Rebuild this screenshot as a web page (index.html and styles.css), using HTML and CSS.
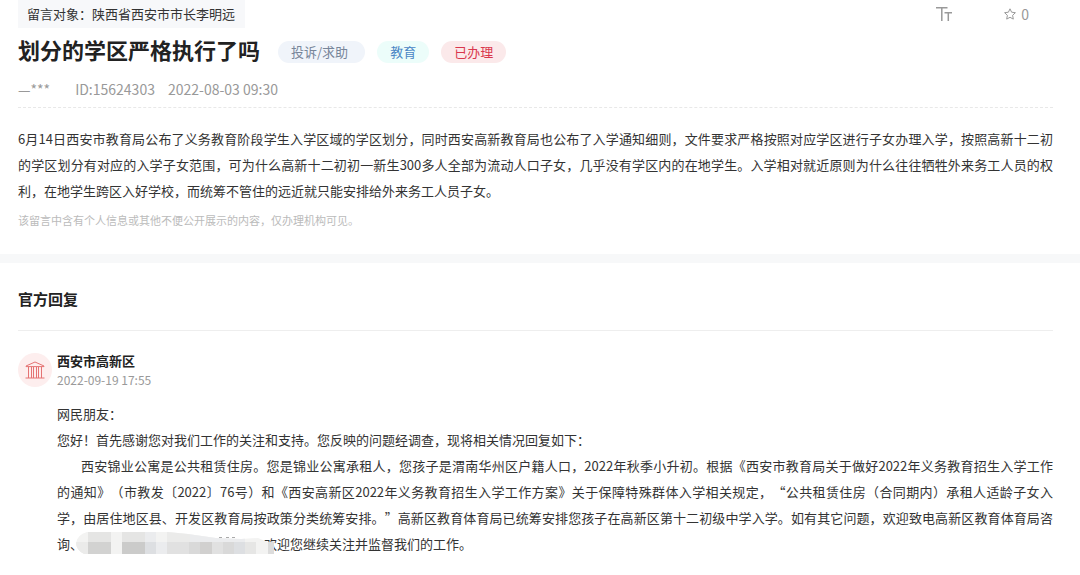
FILE: index.html
```
<!DOCTYPE html>
<html lang="zh-CN">
<head>
    <meta charset="UTF-8">
    <meta name="viewport" content="width=device-width, initial-scale=1.0">
    <title>划分的学区严格执行了吗</title>
    <link rel="stylesheet" href="styles.css">
</head>
<body>
    <main>
        <section class="message">
            <div class="top-bar">
                <div class="target">留言对象：陕西省西安市市长李明远</div>
                <div class="tools">
                    <button class="tool-btn" aria-label="字体大小">
                        <svg width="16" height="16" viewBox="0 0 16 16" fill="none" stroke="#999" stroke-width="1.5">
                            <path d="M0 1.7h11.5M5.8 1.7V15M8.5 6.7H16M12.3 6.7V15"/>
                        </svg>
                    </button>
                    <button class="tool-btn" aria-label="收藏">
                        <svg width="12" height="12" viewBox="0 0 12 12" fill="none" stroke="#999" stroke-linejoin="round">
                            <path d="M6 .8l1.6 3.4 3.8.5-2.8 2.6.7 3.8L6 9.3l-3.3 1.8.7-3.8L.6 4.7l3.8-.5z"/>
                        </svg>
                        <span>0</span>
                    </button>
                </div>
            </div>
            <div class="title-row">
                <h1>划分的学区严格执行了吗</h1>
                <span class="tag tag-type">投诉/求助</span>
                <span class="tag tag-field">教育</span>
                <span class="tag tag-state">已办理</span>
            </div>
            <div class="meta">
                <span class="author">—***</span>
                <span>ID:15624303</span>
                <span>2022-08-03 09:30</span>
            </div>
            <p class="content">6月14日西安市教育局公布了义务教育阶段学生入学区域的学区划分，同时西安高新教育局也公布了入学通知细则，文件要求严格按照对应学区进行子女办理入学，按照高新十二初的学区划分有对应的入学子女范围，可为什么高新十二初初一新生300多人全部为流动人口子女，几乎没有学区内的在地学生。入学相对就近原则为什么往往牺牲外来务工人员的权利，在地学生跨区入好学校，而统筹不管住的远近就只能安排给外来务工人员子女。</p>
            <p class="notice">该留言中含有个人信息或其他不便公开展示的内容，仅办理机构可见。</p>
        </section>

        <section class="reply">
            <h2>官方回复</h2>
            <div class="reply-item">
                <div class="avatar">
                    <svg width="20" height="18" viewBox="0 0 20 18" fill="none" stroke="#e57373">
                        <path d="M1 5L10 1l9 4v.6H1zM.5 17h19M3.5 6v11M6.5 6v11M8.5 6v11M11.5 6v11M13.5 6v11M16.5 6v11"/>
                    </svg>
                </div>
                <div class="reply-main">
                    <h3>西安市高新区</h3>
                    <div class="date">2022-09-19 17:55</div>
                    <div class="reply-text">
                        <p>网民朋友：</p>
                        <p>您好！首先感谢您对我们工作的关注和支持。您反映的问题经调查，现将相关情况回复如下：</p>
                        <p class="indent">西安锦业公寓是公共租赁住房。您是锦业公寓承租人，您孩子是渭南华州区户籍人口，2022年秋季小升初。根据《西安市教育局关于做好2022年义务教育招生入学工作<span class="keep">的通知》</span>（市教发〔2022〕76号）和《西安高新区2022年义务教育招生入学工作方案》关于保障特殊群体入学相关规定，“公共租赁住房（合同期内）承租人适龄子女入<span class="keep">学，由居住地</span>区县、开发区教育局按政策分类统筹安排。”高新区教育体育局已统筹安排您孩子在高新区第十二初级中学入学。如有其它问题，欢迎致电高新区教育体育局咨<span class="keep">询、<span class="hidden-text"><svg class="mosaic" width="198" height="22" viewBox="0 0 198 22" shape-rendering="crispEdges">
                                <clipPath id="brush">
                                    <path d="M11 0H92L112 2 140 6 165 7 182 6 192 10H198V22H8Q0 18 0 11 1 3 11 0z"/>
                                </clipPath>
                                <g clip-path="url(#brush)">
                                    <path fill="#f3f3f2" d="M0 0h198v22H0z"/>
                                    <path fill="#ebebea" d="M0 10h12v12H0zM91 0h23v10H91z"/>
                                    <path fill="#e5e5e4" d="M12 0h23v10H12zM46 0h23v10H46z"/>
                                    <path fill="#d2d2d1" d="M12 10h23v12H12z"/>
                                    <path fill="#cbcbca" d="M46 10h23v12H46z"/>
                                    <path fill="#ebecee" d="M69 0h11v10H69zM80 10h11v12H80zM114 0h55v10h-55z"/>
                                    <path fill="#dddfe2" d="M69 10h11v12H69zM158 10h11v12h-11z"/>
                                    <path fill="#e1e1e1" d="M91 10h22v12H91zM136 10h11v12h-11z"/>
                                    <path fill="#d9d9d9" d="M113 10h11v12h-11zM147 10h11v12h-11z"/>
                                    <path fill="#d1d0cf" d="M124 10h12v12h-12z"/>
                                    <path fill="#e6e6e5" d="M169 10h11v12h-11z"/>
                                    <path fill="#dcdcdc" d="M192 10h6v12h-6z"/>
                                </g>
                                <path fill="#aaa" d="M143 5h3v1h-3zM150 5h3v1h-3zM156 5h3v1h-3z"/>
                            </svg></span></span>欢迎您继续关注并监督我们的工作。</p>
                    </div>
                </div>
            </div>
        </section>
    </main>
</body>
</html>
```
FILE: styles.css
```
* {
    box-sizing: border-box;
}
body {
    margin: 0;
    font-family: "Noto Sans CJK SC", "Noto Sans", sans-serif;
    font-size: 13px;
    color: #333;
    background: #fff;
    text-spacing-trim: space-all;
}
h1, h2, h3, p {
    margin: 0;
}
.message {
    padding: 0 27px 24px 18px;
    border-bottom: 9px solid #f7f8f9;
}
.top-bar {
    display: flex;
    justify-content: space-between;
    height: 28px;
}
.target {
    padding: 0 10px 0 9px;
    line-height: 28px;
    background: #f7f8fa;
}
.tools {
    display: flex;
    align-items: center;
    gap: 52px;
    padding-right: 24px;
}
.tool-btn {
    display: flex;
    align-items: center;
    gap: 5px;
    padding: 0;
    border: none;
    background: none;
    font-family: inherit;
    font-size: 14px;
    color: #999;
    cursor: pointer;
}
.title-row {
    display: flex;
    align-items: center;
    gap: 12px;
    height: 48px;
}
h1 {
    margin-right: 6px;
    padding-bottom: 6px;
    font-size: 22px;
    color: #222;
}
.tag {
    padding: 0 13px;
    line-height: 22px;
    border-radius: 11px;
}
.tag-type {
    padding: 0 17px 0 13px;
    color: #778599;
    background: #f0f4fa;
}
.tag-field {
    color: #4a86c5;
    background: #ecfdfa;
}
.tag-state {
    color: #d9364c;
    background: #fbe9ea;
}
.meta {
    display: flex;
    align-items: center;
    gap: 13px;
    height: 32px;
    padding-bottom: 6px;
    border-bottom: 1px dashed #e8e8e8;
    font-size: 14px;
    color: #999;
}
.author {
    margin-right: 12px;
}
.content {
    margin-top: 18px;
    line-height: 26px;
    text-align: justify;
}
.notice {
    margin-top: 6px;
    line-height: 20px;
    font-size: 11px;
    color: #bbb;
}
.reply {
    padding: 0 27px 16px 18px;
}
h2 {
    height: 68px;
    line-height: 72px;
    border-bottom: 1px solid #eee;
    font-size: 15px;
    color: #222;
}
.reply-item {
    display: flex;
    gap: 5px;
    padding-top: 20px;
}
.avatar {
    display: flex;
    align-items: center;
    justify-content: center;
    flex: none;
    width: 34px;
    height: 34px;
    margin-top: 2px;
    border-radius: 50%;
    background: #fdeeee;
}
h3 {
    line-height: 20px;
    font-size: 13px;
    color: #222;
}
.date {
    line-height: 18px;
    font-size: 12px;
    color: #999;
}
.reply-text {
    margin-top: 12px;
    line-height: 26px;
    text-align: justify;
}
.indent {
    text-indent: 24px;
}
.keep {
    white-space: nowrap;
}
/* phone number is blurred out */
.hidden-text {
    display: inline-block;
    position: relative;
    width: 181px;
    height: 26px;
    vertical-align: top;
    text-indent: 0;
}
.mosaic {
    position: absolute;
    top: 1px;
    left: -7px;
}
```
